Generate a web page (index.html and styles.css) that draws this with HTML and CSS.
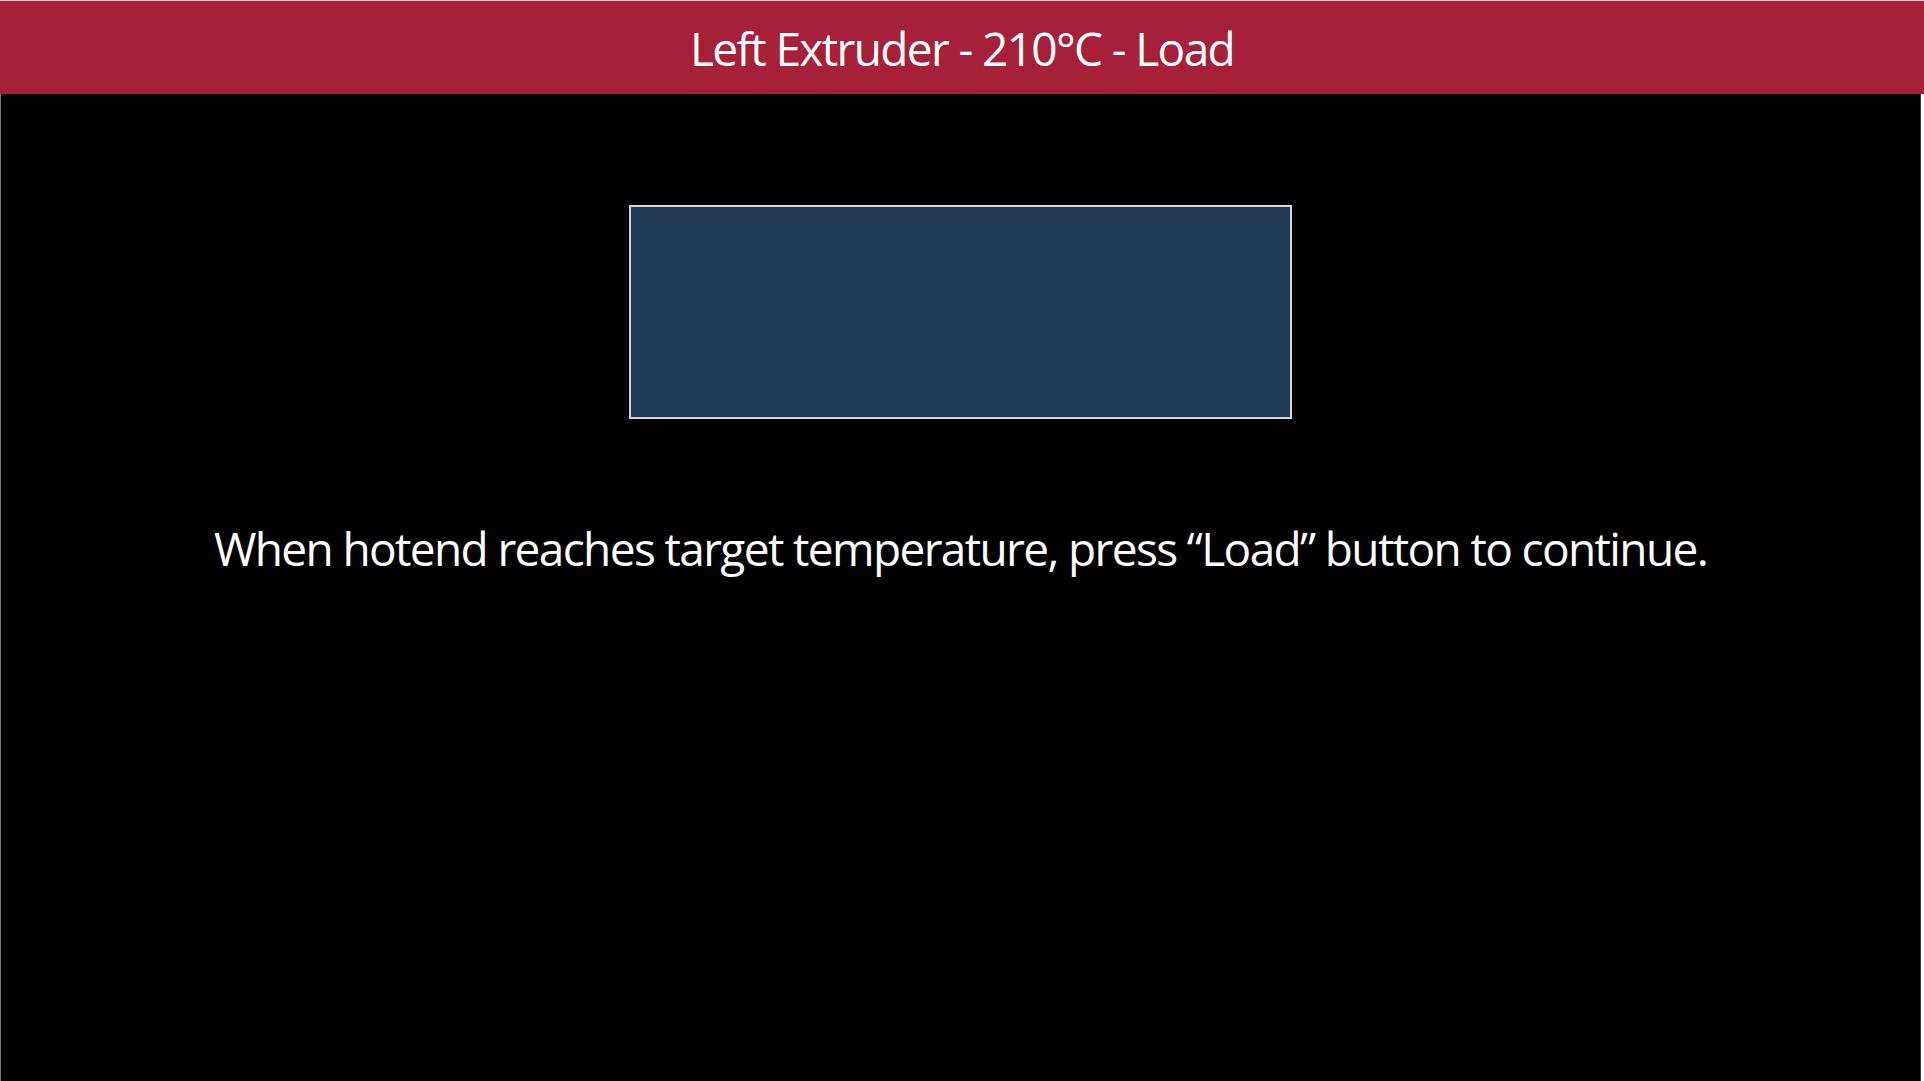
FILE: index.html
```html
<!DOCTYPE html>
<html lang="en">
<head>
<meta charset="utf-8">
<title>Left Extruder - Load</title>
<link rel="stylesheet" href="styles.css">
</head>
<body>
<div class="app">
  <header class="titlebar">
    <h1 class="title">Left Extruder - 210°C - Load</h1>
  </header>
  <main class="content">
    <div class="panel"></div>
    <p class="message">When hotend reaches target temperature, press “Load” button to continue.</p>
  </main>
</div>
</body>
</html>
```

FILE: styles.css
```css
html, body {
  margin: 0;
  padding: 0;
  background: #ffffff;
  height: 100%;
}
.app {
  display: flex;
  flex-direction: column;
  width: 1924px;
  height: 1081px;
  overflow: hidden;
  font-family: "Open Sans", "Liberation Sans", sans-serif;
  color: #ffffff;
}
.titlebar {
  height: 93px;
  flex: none;
  background: #a6203a;
  border-top: 1px solid #d9cfd1;
  display: flex;
  align-items: center;
  justify-content: center;
}
.title {
  margin: 0;
  font-weight: 400;
  font-size: 46px;
  letter-spacing: -1.63px;
  line-height: 1;
}
.content {
  flex: 1;
  width: 1919px;
  background: #000000;
  border-left: 1px solid #7a7a7a;
  border-right: 1px solid #3a3a3a;
  display: flex;
  flex-direction: column;
  align-items: center;
}
.panel {
  width: 659px;
  height: 210px;
  margin-top: 111px;
  background: #1f3a52;
  border: 2px solid #d6d6d6;
}
.message {
  margin: 106px 0 0;
  font-size: 46px;
  letter-spacing: -1.63px;
  line-height: 1;
}
```
